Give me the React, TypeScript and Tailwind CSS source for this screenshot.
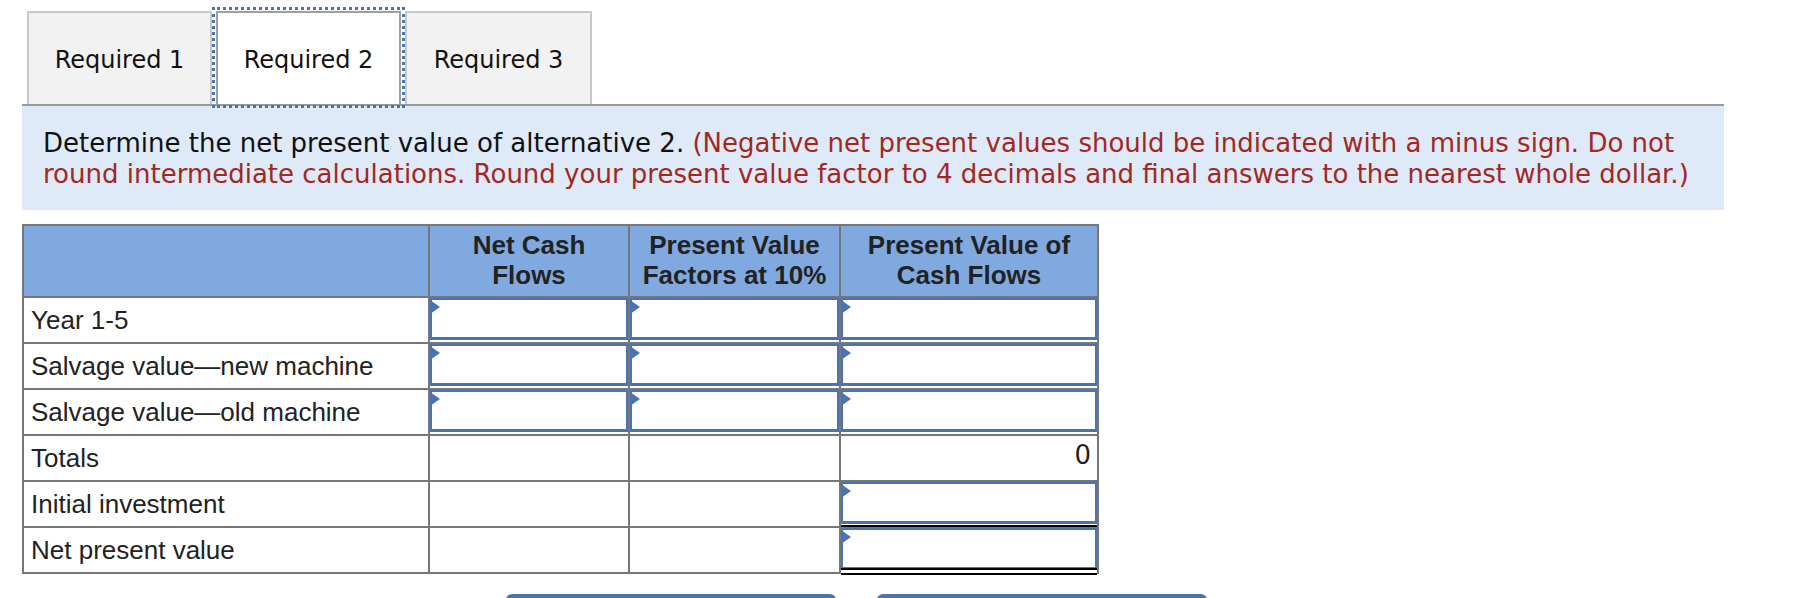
import React from 'react';

const tahoma = { fontFamily: '"DejaVu Sans", Verdana, sans-serif' };
const arial = { fontFamily: '"Liberation Sans", Arial, sans-serif' };

type Cell = 'input' | 'empty' | string;

interface Row {
  label: string;
  cells: Cell[];
  underline?: 'single' | 'double';
}

const rows: Row[] = [
  { label: 'Year 1-5', cells: ['input', 'input', 'input'] },
  { label: 'Salvage value\u2014new machine', cells: ['input', 'input', 'input'] },
  { label: 'Salvage value\u2014old machine', cells: ['input', 'input', 'input'] },
  { label: 'Totals', cells: ['empty', 'empty', '0'] },
  { label: 'Initial investment', cells: ['empty', 'empty', 'input'], underline: 'single' },
  { label: 'Net present value', cells: ['empty', 'empty', 'input'], underline: 'double' },
];

function InputBox({ underline }: { underline?: 'single' | 'double' }) {
  return (
    <div className="relative h-full w-full">
      <div className="relative h-full w-full border-2 border-b-[3px] border-[#4a73b3] bg-white">
        <div className="absolute left-[-2px] top-0 h-0 w-0 border-y-[7px] border-l-[10px] border-y-transparent border-l-[#4a73b3]" />
      </div>
      {underline === 'single' && <div className="absolute bottom-[-3px] left-0 right-0 h-[2px] bg-black" />}
      {underline === 'double' && (
        <div className="absolute bottom-[-5px] left-0 right-0 h-[7px] border-y-2 border-black bg-white" />
      )}
    </div>
  );
}

export default function App() {
  return (
    <div className="h-[598px] w-[1814px] overflow-hidden bg-white">
      {/* Tabs */}
      <div className="flex pl-[27px] pt-[11px]" style={tahoma}>
        <div className="flex h-[93px] w-[185px] items-center justify-center border-2 border-b-0 border-[#c8c8c8] bg-[#f2f2f2] pt-[2px] text-[24px] text-[#111]">
          Required 1
        </div>
        <div className="ml-[4px] flex h-[93px] w-[185px] items-center justify-center border-2 border-b-0 border-[#a0a0a0] bg-white pt-[2px] text-[24px] text-[#111] outline-[3px] outline-offset-1 outline-dotted outline-[#4a73b3]">
          Required 2
        </div>
        <div className="ml-[4px] flex h-[93px] w-[187px] items-center justify-center border-2 border-b-0 border-[#c8c8c8] bg-[#f2f2f2] pt-[2px] text-[24px] text-[#111]">
          Required 3
        </div>
      </div>

      {/* Instructions */}
      <div
        className="ml-[22px] w-[1702px] border-t-2 border-[#999] bg-[#deeaf7] pb-[20px] pl-[21px] pt-[22px] text-[26px] leading-[31px]"
        style={tahoma}
      >
        <span className="text-[#111]">Determine the net present value of alternative 2. </span>
        <span className="text-[#a4271f]">
          (Negative net present values should be indicated with a minus sign. Do not
          <br />
          round intermediate calculations. Round your present value factor to 4 decimals and final answers to the
          nearest whole dollar.)
        </span>
      </div>

      {/* Table */}
      <table
        className="ml-[22px] mt-[14px] w-[1075px] table-fixed border-collapse border-2 border-[#777] text-[26px] text-[#222]"
        style={arial}
      >
        <colgroup>
          <col className="w-[406px]" />
          <col className="w-[200px]" />
          <col className="w-[211px]" />
          <col className="w-[258px]" />
        </colgroup>
        <thead>
          <tr className="h-[72px] bg-[#80aadf]">
            <th className="border-2 border-[#777]" />
            <th className="border-2 border-[#777] pb-[2px] text-center font-bold leading-[30px]">
              Net Cash
              <br />
              Flows
            </th>
            <th className="border-2 border-[#777] pb-[2px] text-center font-bold leading-[30px]">
              Present Value
              <br />
              Factors at 10%
            </th>
            <th className="border-2 border-[#777] pb-[2px] text-center font-bold leading-[30px]">
              Present Value of
              <br />
              Cash Flows
            </th>
          </tr>
        </thead>
        <tbody>
          {rows.map((row) => (
            <tr key={row.label} className="h-[46px]">
              <td className="border-2 border-[#777] px-[7px] font-normal leading-none">{row.label}</td>
              {row.cells.map((c, i) => (
                <td key={i} className="h-[46px] border-2 border-[#777] p-0 align-top">
                  {c === 'input' ? (
                    <div className="h-[42px]">
                      <InputBox underline={row.underline} />
                    </div>
                  ) : c === 'empty' ? null : (
                    <div className="pr-[6px] text-right" style={tahoma}>
                      {c}
                    </div>
                  )}
                </td>
              ))}
            </tr>
          ))}
        </tbody>
      </table>

      {/* Nav buttons (only their tops show) */}
      <div className="mt-[20px] flex gap-[41px] pl-[506px]">
        <button aria-label="Required 1" className="h-[46px] w-[330px] rounded-t-[6px] bg-[#4a73b3]" />
        <button aria-label="Required 3" className="h-[46px] w-[330px] rounded-t-[6px] bg-[#4a73b3]" />
      </div>
    </div>
  );
}
